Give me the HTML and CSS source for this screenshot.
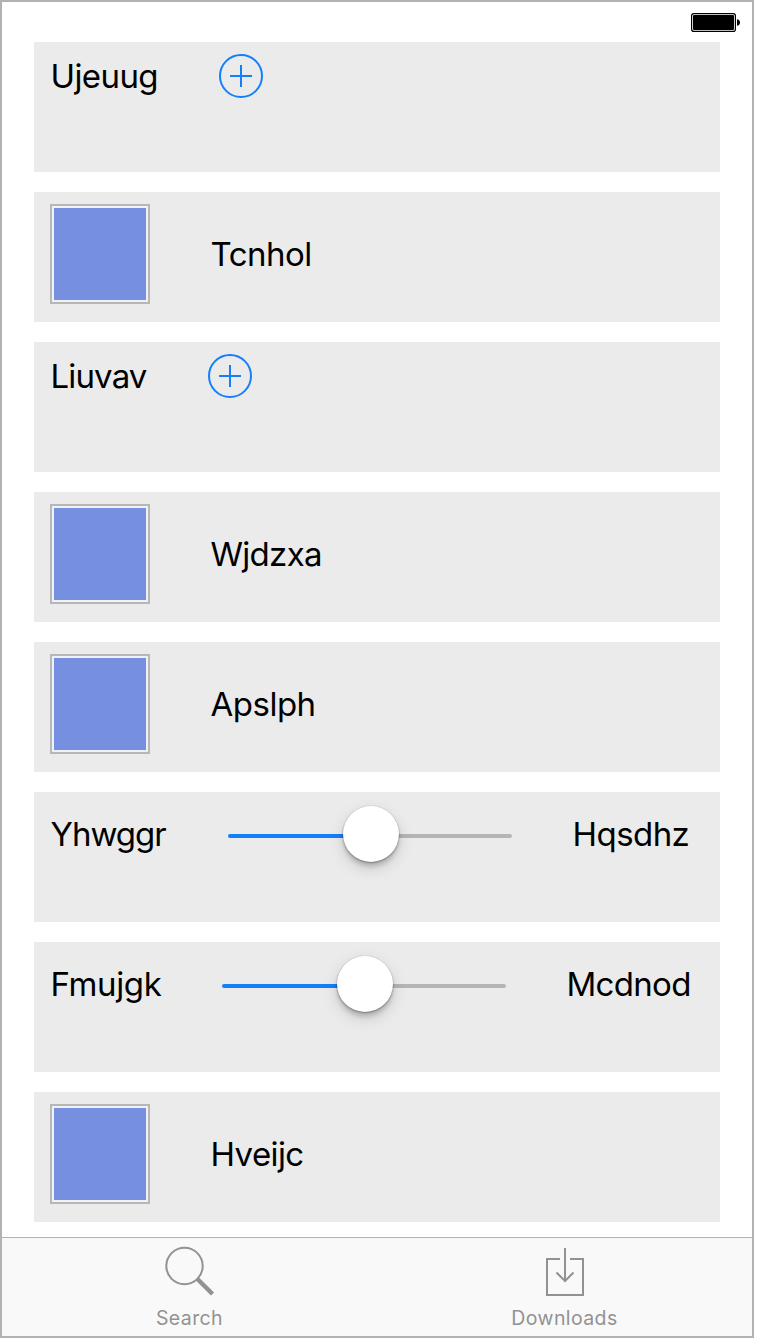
FILE: index.html
```html
<!DOCTYPE html>
<html lang="en">
<head>
<meta charset="utf-8">
<title>Components</title>
<link rel="stylesheet" href="styles.css">
</head>
<body>
<div class="screen">
  <header class="status-bar">
    <svg class="battery" width="50" height="20" viewBox="0 0 50 20">
      <rect x="0.6" y="0.6" width="43.8" height="17.8" rx="2.2" fill="#fff" stroke="#000" stroke-width="1.2"/>
      <rect x="2" y="2" width="41" height="15" rx="1" fill="#000"/>
      <path d="M46 6.2c1.8.2 3 1.4 3 3.3s-1.2 3.1-3 3.3z" fill="#000"/>
    </svg>
  </header>
  <main class="list">
    <section class="card">
      <span class="label label-ujeuug">Ujeuug</span>
      <svg class="add" width="44" height="44" viewBox="0 0 44 44"><circle cx="22" cy="22" r="21"/><path d="M11 22H33M22 11V33"/></svg>
    </section>
    <section class="card card-media">
      <span class="swatch"></span>
      <span class="label label-tcnhol">Tcnhol</span>
    </section>
    <section class="card">
      <span class="label label-liuvav">Liuvav</span>
      <svg class="add" width="44" height="44" viewBox="0 0 44 44"><circle cx="22" cy="22" r="21"/><path d="M11 22H33M22 11V33"/></svg>
    </section>
    <section class="card card-media">
      <span class="swatch"></span>
      <span class="label label-wjdzxa">Wjdzxa</span>
    </section>
    <section class="card card-media">
      <span class="swatch"></span>
      <span class="label label-apslph">Apslph</span>
    </section>
    <section class="card card-slider">
      <span class="label label-yhwggr">Yhwggr</span>
      <div class="slider"><span class="thumb"></span></div>
      <span class="label label-hqsdhz">Hqsdhz</span>
    </section>
    <section class="card card-slider">
      <span class="label label-fmujgk">Fmujgk</span>
      <div class="slider"><span class="thumb"></span></div>
      <span class="label label-mcdnod">Mcdnod</span>
    </section>
    <section class="card card-media">
      <span class="swatch"></span>
      <span class="label label-hveijc">Hveijc</span>
    </section>
  </main>
  <nav class="tab-bar">
    <div class="tab">
      <svg class="tab-icon" width="52" height="52" viewBox="0 0 52 52"><circle cx="20.5" cy="20" r="18.2"/><path d="M33.2 32.7L48.5 48" stroke-width="4.4"/></svg>
      <span class="tab-label tab-search">Search</span>
    </div>
    <div class="tab">
      <svg class="tab-icon" width="52" height="52" viewBox="0 0 52 52"><path d="M21 13H8V49H44V13H31M26 2V35M17.5 26.5L26 35L34.5 26.5"/></svg>
      <span class="tab-label tab-downloads">Downloads</span>
    </div>
  </nav>
</div>
</body>
</html>
```
FILE: styles.css
```css
* { box-sizing: border-box; }
body {
  margin: 0;
  background: #fff;
  color: #000;
  font-family: Inter, "Liberation Sans", sans-serif;
}
.screen {
  width: 754px;
  height: 1338px;
  border: 2px solid #b2b2b2;
  display: flex;
  flex-direction: column;
}
.status-bar {
  height: 40px;
  padding: 11px 11px 0 0;
  display: flex;
  justify-content: flex-end;
  align-items: flex-start;
  flex: none;
}
.battery { display: block; }
.list {
  flex: 1;
  display: flex;
  flex-direction: column;
  gap: 20px;
  padding: 0 32px;
}
.card {
  height: 130px;
  flex: none;
  background: #ebebeb;
  padding: 12px 16px;
  display: flex;
  align-items: flex-start;
  gap: 60px;
}
.card-media { align-items: center; padding: 0 16px 6px; }
.label {
  font-size: 33px;
  line-height: 44px;
  letter-spacing: -.6px;
  padding-left: .5px;
  white-space: nowrap;
  flex: none;
}
.card-slider .label { margin-top: 8px; }
.label-ujeuug { width: 109px; }
.label-tcnhol { letter-spacing: -.5px; }
.label-liuvav { width: 98px; letter-spacing: -.85px; }
.label-wjdzxa { letter-spacing: -.7px; }
.label-apslph { letter-spacing: -.5px; }
.label-yhwggr { width: 118px; letter-spacing: -1px; }
.label-hqsdhz { letter-spacing: -.55px; }
.label-fmujgk { width: 112px; letter-spacing: -.4px; }
.label-mcdnod { letter-spacing: -.7px; }
.add { display: block; fill: none; stroke: #147efb; stroke-width: 2; }
.swatch {
  width: 100px;
  height: 100px;
  border: 2px solid #b7b7b7;
  padding: 2px;
  background: #768fe1 content-box;
  box-shadow: inset 0 0 0 2px #f0f2fa;
}
.slider {
  width: 284px;
  height: 4px;
  margin-top: 30px;
  border-radius: 2px;
  background: linear-gradient(to right, #147efb 50%, #b5b5b5 50%);
  display: flex;
  align-items: center;
  justify-content: center;
}
.thumb {
  width: 56px;
  height: 56px;
  flex: none;
  margin: 0 0 4px 2px;
  border-radius: 50%;
  background: #fff;
  box-shadow: 0 0 0 1px rgba(0,0,0,.04), 0 6px 16px rgba(0,0,0,.15), 0 5px 4px rgba(0,0,0,.14), 0 1px 2px rgba(0,0,0,.3);
}
.tab-bar {
  height: 99px;
  flex: none;
  border-top: 1px solid #b2b2b2;
  background: #f9f9f9;
  display: grid;
  grid-template-columns: 1fr 1fr;
}
.tab {
  display: flex;
  flex-direction: column;
  align-items: center;
  padding-top: 8px;
  color: #929292;
}
.tab-icon { display: block; fill: none; stroke: currentColor; stroke-width: 2; }
.tab-label { font-size: 19.5px; line-height: 24px; margin-top: 8px; letter-spacing: .4px; }
```
